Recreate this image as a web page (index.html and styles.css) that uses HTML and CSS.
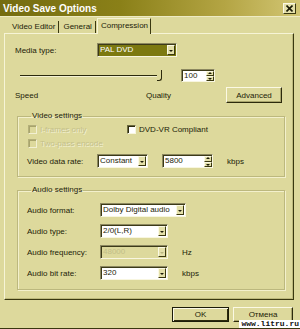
FILE: index.html
```html
<!DOCTYPE html>
<html lang="ru">
<head>
    <meta charset="UTF-8">
    <title>Video Save Options</title>
    <link rel="stylesheet" href="styles.css">
</head>
<body>
    <div class="window">
        <!-- title bar -->
        <div class="titlebar">
            <span class="title">Video Save Options</span>
            <span class="close">
                <svg width="7" height="7" viewBox="0 0 7 7"><path d="M0.5 0.5 L6.5 6.5 M6.5 0.5 L0.5 6.5" stroke="#1a1a06" stroke-width="1.6"/></svg>
            </span>
        </div>

        <!-- tabs -->
        <div class="tabs">
            <span class="tab">Video Editor</span>
            <span class="tab">General</span>
            <span class="tab active">Compression</span>
        </div>

        <div class="panel">
            <div class="row media-row">
                <span class="lbl lbl-media">Media type:</span>
                <div class="combo selected w-media"><span class="val">PAL DVD</span><span class="drop"></span></div>
            </div>

            <div class="row slider-row">
                <div class="slider"><span class="track"></span><span class="thumb"></span></div>
                <div class="spin w-100"><span class="val">100</span><span class="arrows"><i class="up"></i><i class="down"></i></span></div>
            </div>

            <div class="row sq-row">
                <span class="speed">Speed</span>
                <span class="quality">Quality</span>
                <button class="btn btn-adv">Advanced</button>
            </div>

            <fieldset class="group group-video">
                <legend>Video settings</legend>
                <div class="row check-row">
                    <span class="check disabled first"><span class="box"></span>I-frames only</span>
                    <span class="check"><span class="box"></span>DVD-VR Compliant</span>
                </div>
                <div class="row check-row second">
                    <span class="check disabled"><span class="box"></span>Two-pass encode</span>
                </div>
                <div class="row field-row rate-row">
                    <span class="lbl lbl-rate">Video data rate:</span>
                    <div class="combo w-rate"><span class="val">Constant</span><span class="drop"></span></div>
                    <div class="spin w-5800"><span class="val">5800</span><span class="arrows"><i class="up"></i><i class="down"></i></span></div>
                    <span class="unit">kbps</span>
                </div>
            </fieldset>

            <fieldset class="group group-audio">
                <legend>Audio settings</legend>
                <div class="row field-row first">
                    <span class="lbl lbl-audio">Audio format:</span>
                    <div class="combo w-format"><span class="val">Dolby Digital audio</span><span class="drop"></span></div>
                </div>
                <div class="row field-row">
                    <span class="lbl lbl-audio">Audio type:</span>
                    <div class="combo w-small"><span class="val">2/0(L,R)</span><span class="drop"></span></div>
                </div>
                <div class="row field-row">
                    <span class="lbl lbl-audio">Audio frequency:</span>
                    <div class="combo w-small disabled"><span class="val">48000</span><span class="drop"></span></div>
                    <span class="unit">Hz</span>
                </div>
                <div class="row field-row">
                    <span class="lbl lbl-audio">Audio bit rate:</span>
                    <div class="combo w-small"><span class="val">320</span><span class="drop"></span></div>
                    <span class="unit">kbps</span>
                </div>
            </fieldset>
        </div>

        <div class="buttons">
            <button class="btn btn-ok">OK</button>
            <button class="btn btn-cancel">Отмена</button>
        </div>

        <div class="watermark">www.litru.ru</div>
    </div>
</body>
</html>
```

FILE: styles.css
```css
/* base */
body {
    margin: 0;
    padding: 0;
    font-family: "Liberation Sans", Arial, sans-serif;
    font-size: 8px;
    color: #1c1c08;
    background-color: #ddd99c;
}

.window {
    position: relative;
    width: 300px;
    height: 329px;
    box-sizing: border-box;
    background-color: #ddd99c;
    border-bottom: 1px solid #3a3810;
    overflow: hidden;
}

/* title bar */
.titlebar {
    height: 16px;
    display: flex;
    align-items: center;
    justify-content: space-between;
    padding: 0 4px 0 3px;
    background: linear-gradient(to right, #746c10 0%, #8a8018 40%, #b4a544 75%, #d2c674 100%);
    border-bottom: 1px solid #eeebc4;
}

.title {
    font-size: 10px;
    font-weight: bold;
    color: #ffffff;
}

.close {
    width: 13px;
    height: 11px;
    box-sizing: border-box;
    display: flex;
    align-items: center;
    justify-content: center;
    background: #e4e0aa;
    border: 1px solid;
    border-color: #fbf9e4 #3a3810 #3a3810 #fbf9e4;
}

/* tabs */
.tabs {
    height: 16px;
    display: flex;
    align-items: flex-end;
    padding-left: 8px;
}

.tab {
    height: 12px;
    line-height: 12px;
    padding: 0 3px 0 4px;
    border-right: 1px solid #3a3810;
}

.tab.active {
    height: 16px;
    line-height: 14px;
    padding: 0 2px 0 3px;
    margin-left: 1px;
    border-left: 1px solid #f6f4d6;
    border-top: 1px solid #f6f4d6;
    box-sizing: border-box;
    position: relative;
    top: 1px;
    background: #ddd99c;
}

/* main panel */
.panel {
    margin-left: 4px;
    width: 290px;
    height: 267px;
    box-sizing: border-box;
    padding: 9px 0 0 10px;
    border: 1px solid;
    border-color: #f6f4d6 #3a3810 #3a3810 #f6f4d6;
    box-shadow: inset -1px -1px 0 #bdb97c;
}

.row {
    display: flex;
    align-items: center;
}

.lbl-media {
    width: 82px;
}

/* combo boxes */
.combo {
    height: 14px;
    box-sizing: border-box;
    display: flex;
    align-items: stretch;
    background: #ffffff;
    border: 1px solid;
    border-color: #8c8860 #f8f6e0 #f8f6e0 #8c8860;
    box-shadow: inset 1px 1px 0 #3c3a18;
}

.combo .val {
    flex: 1;
    padding-left: 2px;
    line-height: 12px;
    white-space: nowrap;
    overflow: hidden;
}

.combo.selected {
    background: #7c7910;
    color: #ffffff;
}

.combo.disabled {
    background: #ddd99c;
    color: #c2be88;
}

.drop {
    width: 8px;
    margin: 1px 1px 1px 0;
    position: relative;
    background: #e4e0aa;
    border: 1px solid;
    border-color: #fbf9e4 #3a3810 #3a3810 #fbf9e4;
    box-sizing: border-box;
}

.drop::after {
    content: "";
    position: absolute;
    left: 1px;
    top: 4px;
    border-left: 2px solid transparent;
    border-right: 2px solid transparent;
    border-top: 2px solid #1c1c08;
}

.combo.disabled .drop::after {
    border-top-color: #bab680;
}

.w-media { width: 80px; }
.w-rate { width: 51px; }
.w-format { width: 86px; }
.w-small { width: 68px; }

/* spin boxes */
.spin {
    height: 13px;
    box-sizing: border-box;
    display: flex;
    background: #ffffff;
    border: 1px solid;
    border-color: #8c8860 #f8f6e0 #f8f6e0 #8c8860;
    box-shadow: inset 1px 1px 0 #3c3a18;
}

.spin .val {
    flex: 1;
    padding-left: 2px;
    line-height: 11px;
}

.arrows {
    width: 8px;
    display: flex;
    flex-direction: column;
    margin: 1px 0 0 0;
}

.arrows i {
    flex: 1;
    position: relative;
    background: #e4e0aa;
    border: 1px solid;
    border-color: #fbf9e4 #3a3810 #3a3810 #fbf9e4;
}

.arrows i::after {
    content: "";
    position: absolute;
    left: 1px;
    top: 1px;
    border-left: 2px solid transparent;
    border-right: 2px solid transparent;
}

.arrows .up::after { border-bottom: 2px solid #1c1c08; top: 0; }
.arrows .down::after { border-top: 2px solid #1c1c08; }

.w-100 { width: 34px; }
.w-5800 { width: 51px; }

/* slider */
.slider-row {
    margin-top: 12px;
    height: 12px;
}

.slider {
    margin-left: 5px;
    width: 142px;
    height: 12px;
    display: flex;
    align-items: center;
}

.track {
    width: 137px;
    height: 1px;
    background: #2c2a0c;
    box-shadow: 0 1px 0 #f4f2d4;
}

.thumb {
    width: 4px;
    height: 10px;
    margin-left: 0;
    border-right: 1px solid #2c2a0c;
    border-bottom: 1px solid #2c2a0c;
    border-bottom-right-radius: 3px;
}

.spin.w-100 {
    margin-left: 19px;
}

/* speed / quality */
.sq-row {
    margin-top: 6px;
    height: 16px;
}

.speed {
    width: 131px;
}

.quality {
    width: 80px;
}

.btn {
    font-family: "Liberation Sans", Arial, sans-serif;
    font-size: 8px;
    color: #1c1c08;
    padding: 0;
    background: #ddd99c;
    border: 1px solid;
    border-color: #fbf9e4 #2c2a0c #2c2a0c #fbf9e4;
    box-shadow: inset -1px -1px 0 #a9a56c;
}

.btn-adv {
    width: 56px;
    height: 16px;
}

/* group boxes */
.group {
    margin: 0 0 0 2px;
    width: 268px;
    box-sizing: border-box;
    padding: 0 0 0 10px;
    border: 1px solid #bcb87e;
    box-shadow: inset 1px 1px 0 #f3f0cc, 1px 1px 0 #f3f0cc;
}

.group legend {
    margin-left: 3px;
    padding: 0 1px;
    line-height: 10px;
}

.group-video {
    margin-top: 8px;
    padding-bottom: 8px;
}

.group-audio {
    margin-top: 8px;
    padding-bottom: 9px;
}

/* checkboxes */
.check-row {
    margin-top: 3px;
    height: 10px;
}

.check-row.second {
    margin-top: 4px;
}

.check {
    display: flex;
    align-items: center;
    gap: 3px;
}

.check.first {
    width: 99px;
}

.check .box {
    width: 9px;
    height: 9px;
    box-sizing: border-box;
    background: #ffffff;
    border: 1px solid;
    border-color: #6c6a40 #f8f6e0 #f8f6e0 #6c6a40;
    box-shadow: inset 1px 1px 0 #2c2a0c;
}

.check.disabled {
    color: #c4c08a;
    text-shadow: 1px 1px 0 #f2f0d2;
}

.check.disabled .box {
    background: #ddd99c;
    border-color: #b4b07a #f2f0d2 #f2f0d2 #b4b07a;
    box-shadow: inset 1px 1px 0 #a8a46c;
}

/* field rows */
.field-row {
    height: 14px;
    margin-top: 7px;
    margin-left: -1px;
}

.rate-row {
    margin-top: 6px;
}

.group-audio .field-row.first {
    margin-top: 8px;
}

.lbl-rate {
    width: 70px;
}

.lbl-audio {
    width: 73px;
}

.spin.w-5800 {
    height: 14px;
    margin-left: 14px;
}

.spin.w-5800 .val {
    line-height: 12px;
}

.unit {
    margin-left: 14px;
}

/* bottom buttons */
.buttons {
    display: flex;
    justify-content: flex-end;
    gap: 4px;
    margin-top: 7px;
    padding-right: 7px;
}

.btn-ok {
    width: 57px;
    height: 15px;
    border: 1px solid #1c1c08;
    box-shadow: inset 1px 1px 0 #fbf9e4, inset -1px -1px 0 #2c2a0c;
}

.btn-cancel {
    width: 60px;
    height: 15px;
}

/* watermark */
.watermark {
    position: absolute;
    right: 0;
    bottom: 0;
    padding: 0 1px 0 2px;
    font-family: "Liberation Mono", monospace;
    font-size: 8px;
    font-weight: bold;
    line-height: 8px;
    color: #101010;
    background: #ffffff;
}
```
